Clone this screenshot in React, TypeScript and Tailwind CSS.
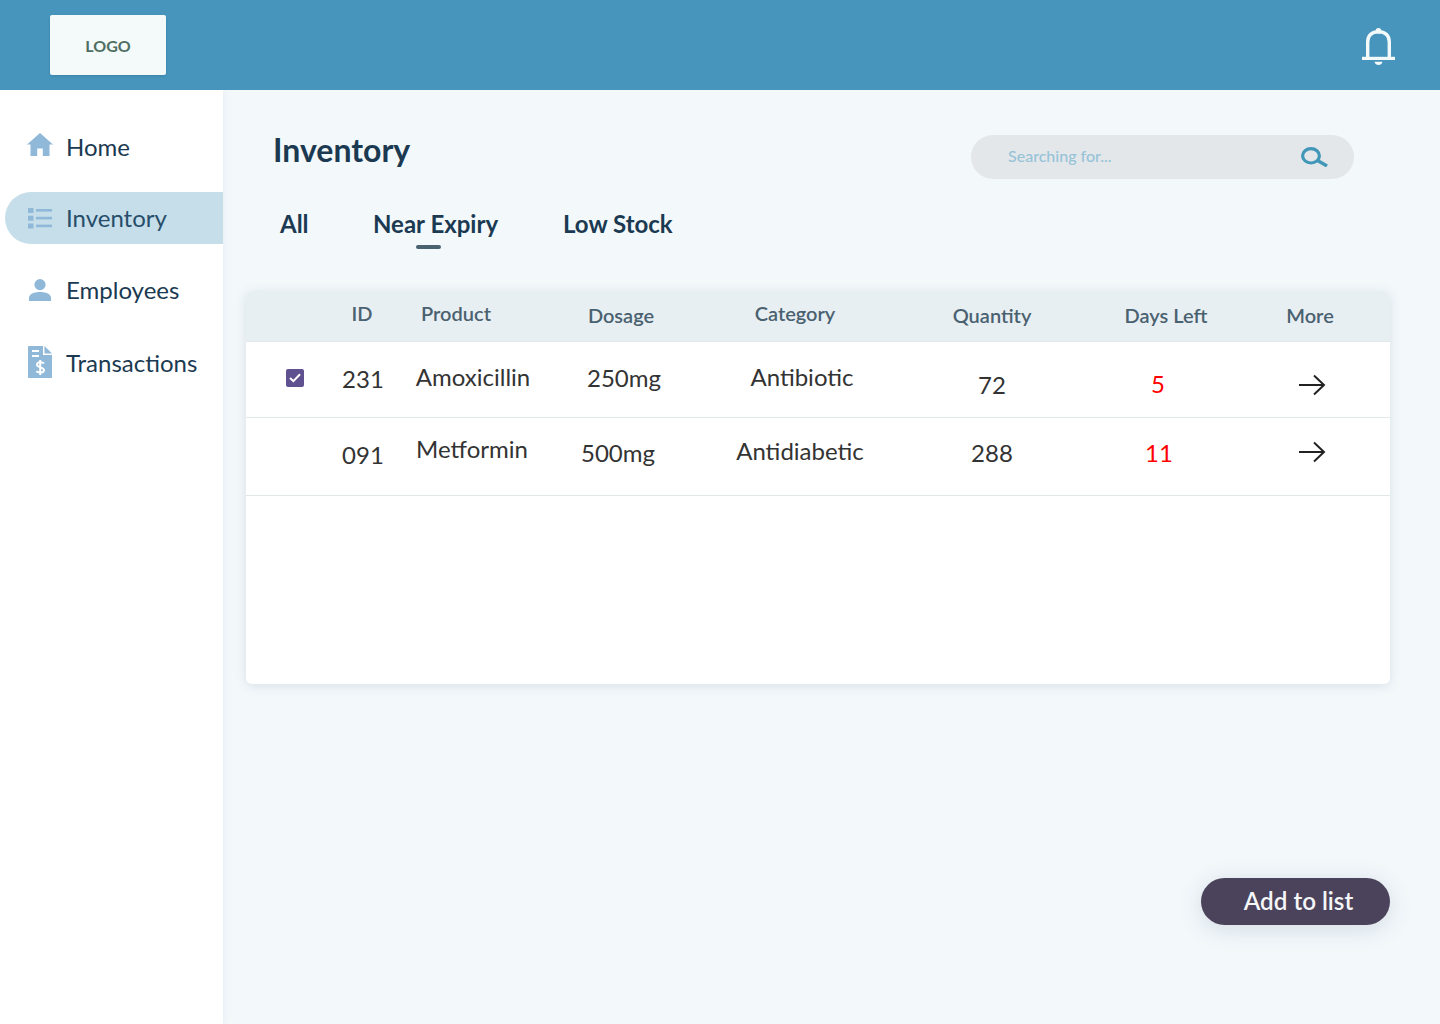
import { ReactNode } from 'react';

const HomeIcon = () => (
  <svg width="26" height="24" viewBox="0 0 26 24" fill="#8fb8d9" className="-mt-[4px]">
    <path d="M13 0 L26 11.5 L22.5 11.5 L22.5 23 L15.8 23 L15.8 15.5 L10.2 15.5 L10.2 23 L3.5 23 L3.5 11.5 L0 11.5 Z" />
  </svg>
);

const ListIcon = () => (
  <svg width="24" height="21" viewBox="0 0 24 21" fill="#8fb8d9">
    <rect x="0" y="0" width="5.5" height="5" />
    <rect x="0" y="7.7" width="5.5" height="5" />
    <rect x="0" y="15.5" width="5.5" height="5" />
    <rect x="8" y="1" width="16" height="2.6" />
    <rect x="8" y="8.8" width="16" height="2.6" />
    <rect x="8" y="16.6" width="16" height="2.6" />
  </svg>
);

const UserIcon = () => (
  <svg width="22" height="22" viewBox="0 0 22 22" fill="#8fb8d9">
    <circle cx="11" cy="5.6" r="5.6" />
    <path d="M0 22 L0 19 C0 15 5 13 11 13 C17 13 22 15 22 19 L22 22 Z" />
  </svg>
);

const ReceiptIcon = () => (
  <svg width="24" height="32" viewBox="0 0 24 32" className="-mt-[2px]">
    <path fill="#8fb8d9" d="M1 0 L15 0 L15 9 L24 9 L24 31 Q24 32 23 32 L1 32 Q0 32 0 31 L0 1 Q0 0 1 0 Z" />
    <path fill="#8fb8d9" d="M16.5 0 L24 7.5 L16.5 7.5 Z" />
    <rect x="4" y="4" width="7" height="2" fill="#fff" />
    <rect x="4" y="9" width="7" height="2" fill="#fff" />
    <path fill="none" stroke="#fff" strokeWidth="2" d="M16 17.5 C15 16 9 15.5 9 18.6 C9 22 16 20.8 16 24.2 C16 27.2 9.8 27 8.4 25.2 M12.2 14 L12.2 29" />
  </svg>
);

const BellIcon = () => (
  <svg width="33" height="38" viewBox="0 0 33 38" fill="none" className="mt-[3px]">
    <circle cx="16.5" cy="2.8" r="2.8" fill="#f4f9fa" />
    <path d="M5.7 30 L5.7 14 C5.7 7 10 3.7 16.5 3.7 C23 3.7 27.3 7 27.3 14 L27.3 30" stroke="#f4f9fa" strokeWidth="3.4" />
    <rect x="0" y="28.8" width="33" height="3.2" fill="#f4f9fa" />
    <path d="M12.5 33.8 L20.5 33.8 C20 36.4 18.4 37 16.5 37 C14.6 37 13 36.4 12.5 33.8 Z" fill="#f4f9fa" />
  </svg>
);

const SearchIcon = () => (
  <svg width="27" height="20" viewBox="0 0 27 20" fill="none" stroke="#4297b9">
    <ellipse cx="10" cy="8.8" rx="8.4" ry="7.2" strokeWidth="3.2" />
    <path d="M16.5 13.5 L26 19" strokeWidth="3.4" />
  </svg>
);

const ArrowIcon = () => (
  <svg width="28" height="22" viewBox="0 0 28 22" fill="none" stroke="#222" strokeWidth="2">
    <path d="M1 11 L26 11 M16 1.5 L26 11 L16 20.5" />
  </svg>
);

const NavItem = ({ icon, label, active, className }: { icon: ReactNode; label: string; active?: boolean; className: string }) => (
  <div className={`flex items-center ml-[5px] ${active ? 'bg-[#c6dee9] rounded-l-full' : ''} ${className}`}>
    <div className="w-[61px] flex justify-center items-center pl-[9px] shrink-0">{icon}</div>
    <span className={`text-[24px] ${active ? 'text-[#264e6b]' : 'text-[#1b3a52]'}`}>{label}</span>
  </div>
);

const Cell = ({ className, children }: { className: string; children: ReactNode }) => (
  <div className={`flex justify-center items-center whitespace-nowrap ${className}`}>{children}</div>
);

export default function App() {
  return (
    <div className="w-[1440px] h-[1024px] overflow-hidden bg-[#f3f8fb] font-['Lato',sans-serif] flex flex-col">
      {/* Header */}
      <header className="h-[90px] shrink-0 bg-[#4795bd] flex items-center justify-between pl-[50px] pr-[45px] relative z-10">
        <div className="w-[116px] h-[60px] pt-[1px] bg-[#f4f9fa] rounded-[2px] flex items-center justify-center text-[16px] font-bold text-[#4e6e62] shadow-sm">
          LOGO
        </div>
        <BellIcon />
      </header>

      <div className="flex flex-1">
        {/* Sidebar */}
        <aside className="w-[223px] shrink-0 bg-white shadow-[2px_0_6px_rgba(60,100,140,0.06)] pt-[31px]">
          <NavItem icon={<HomeIcon />} label="Home" className="h-[52px]" />
          <NavItem icon={<ListIcon />} label="Inventory" active className="h-[52px] mt-[19px]" />
          <NavItem icon={<UserIcon />} label="Employees" className="h-[52px] mt-[20px]" />
          <NavItem icon={<ReceiptIcon />} label="Transactions" className="h-[52px] mt-[21px]" />
        </aside>

        {/* Main */}
        <main className="flex-1 flex flex-col pl-[23px] pr-[50px]">
          <div className="flex items-start justify-between pl-[27px] pr-[36px] pt-[45px]">
            <h1 className="text-[32px] leading-[40px] font-bold text-[#1b3a52] -mt-[5px]">Inventory</h1>
            <div className="w-[383px] h-[44px] rounded-full bg-[#e3e7ea] flex items-center justify-between pl-[37px] pr-[26px]">
              <span className="text-[16px] font-medium text-[#97c3d7] pb-[2px]">Searching for...</span>
              <SearchIcon />
            </div>
          </div>

          <nav className="flex pl-[34px] mt-[29px] text-[24px] font-bold text-[#1b3a52] leading-[32px]">
            <span className="w-[93px]">All</span>
            <div className="w-[190px] flex flex-col">
              <span>Near Expiry</span>
              <div className="w-[25px] h-[4px] rounded-full bg-[#4a6170] ml-[43px] mt-[5px]" />
            </div>
            <span>Low Stock</span>
          </nav>

          {/* Table */}
          <section className="mt-[42px] h-[393px] bg-white rounded-[6px] shadow-[0_2px_12px_rgba(50,80,110,0.13)] overflow-hidden">
            <div className="h-[51px] bg-[#e8eff3] border-b border-[#e2e7ea] flex text-[20px] font-semibold text-[#4a6170]">
              <div className="w-[86px]" />
              <Cell className="w-[60px] pb-[6px]">ID</Cell>
              <Cell className="w-[162px] pb-[6px] pr-[34px]">Product</Cell>
              <Cell className="w-[134px] pb-[2px]">Dosage</Cell>
              <Cell className="w-[216px] pb-[6px] pr-[2px]">Category</Cell>
              <Cell className="w-[176px] pb-[2px]">Quantity</Cell>
              <Cell className="w-[162px] pb-[2px] pl-[10px]">Days Left</Cell>
              <Cell className="w-[140px] pb-[2px] pr-[4px]">More</Cell>
            </div>

            <div className="h-[76px] border-b border-[#e2e7ea] flex text-[24px] text-[#333]">
              <div className="w-[86px] flex items-center justify-start pl-[40px] pb-[4px]">
                <span className="w-[18px] h-[18px] rounded-[2px] bg-[#5f5190] flex items-center justify-center">
                  <svg width="12" height="10" viewBox="0 0 12 10" fill="none" stroke="#fff" strokeWidth="2">
                    <path d="M1 5 L4.4 8.2 L11 1.2" />
                  </svg>
                </span>
              </div>
              <Cell className="w-[60px] pb-[2px] pl-[2px]">231</Cell>
              <Cell className="w-[162px] pb-[6px]">Amoxicillin</Cell>
              <Cell className="w-[134px] pb-[4px] pl-[6px]">250mg</Cell>
              <Cell className="w-[216px] pb-[6px] pl-[12px]">Antibiotic</Cell>
              <Cell className="w-[176px] pt-[10px]">72</Cell>
              <Cell className="w-[162px] pt-[8px] pr-[6px] text-[#f00]">5</Cell>
              <Cell className="w-[140px] pt-[10px]"><ArrowIcon /></Cell>
            </div>

            <div className="h-[78px] border-b border-[#e2e7ea] flex text-[24px] text-[#333]">
              <div className="w-[86px]" />
              <Cell className="w-[60px] pb-[6px] pt-[2px] pl-[2px]">091</Cell>
              <Cell className="w-[162px] pb-[15px] pr-[2px]">Metformin</Cell>
              <Cell className="w-[134px] pr-[6px] pb-[8px]">500mg</Cell>
              <Cell className="w-[216px] pl-[8px] pb-[12px]">Antidiabetic</Cell>
              <Cell className="w-[176px] pb-[7px]">288</Cell>
              <Cell className="w-[162px] pr-[4px] pb-[7px] text-[#f00]">11</Cell>
              <Cell className="w-[140px] pb-[10px]"><ArrowIcon /></Cell>
            </div>
          </section>

          {/* Footer action */}
          <div className="flex justify-end mt-[194px]">
            <button className="w-[189px] h-[47px] pl-[6px] rounded-full bg-[#4b435b] text-[24.2px] font-semibold text-[#f4f6f8] shadow-[0_4px_24px_rgba(50,80,110,0.16)]">
              Add to list
            </button>
          </div>
        </main>
      </div>
    </div>
  );
}
